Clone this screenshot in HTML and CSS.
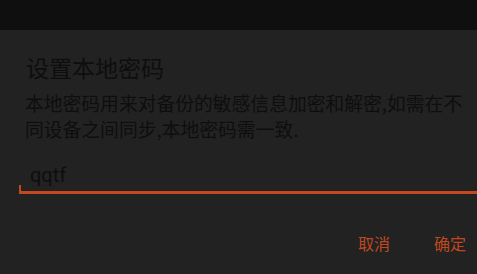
FILE: index.html
```html
<!DOCTYPE html>
<html lang="zh-CN">
<head>
    <meta charset="UTF-8">
    <meta name="viewport" content="width=device-width, initial-scale=1.0">
    <title>设置本地密码</title>
    <link rel="stylesheet" href="styles.css">
</head>
<body>

    <div class="top-bar"></div>

    <div class="dialog">
        <h2 class="dialog-title">设置本地密码</h2>

        <p class="dialog-message">本地密码用来对备份的敏感信息加密和解密,如需在不同设备之间同步,本地密码需一致.</p>

        <!-- 密码输入框 -->
        <div class="input-wrap">
            <div class="input-text">qqtf</div>
        </div>

        <!-- 按钮 -->
        <div class="dialog-buttons">
            <button class="dialog-btn">取消</button>
            <button class="dialog-btn">确定</button>
        </div>
    </div>

</body>
</html>
```

FILE: styles.css
```css
body {
    margin: 0;
    padding: 0;
    width: 477px;
    height: 274px;
    overflow: hidden;
    background-color: #222222;
    font-family: "Noto Sans CJK SC", "Noto Sans", sans-serif;
}

.top-bar {
    height: 30px;
    background-color: #0f0f0f;
}

.dialog {
    background-color: #222222;
    padding: 0 0 0 19px;
}

.dialog-title {
    margin: 0;
    padding: 21px 0 0 7px;
    font-size: 23px;
    font-weight: normal;
    line-height: 32px;
    color: #0e0e0e;
}

.dialog-message {
    margin: 0;
    padding: 7px 10px 0 6px;
    font-size: 18.8px;
    line-height: 26px;
    color: #0e0e0e;
}

.input-wrap {
    margin-top: 21px;
    height: 28px;
    border-bottom: 3px solid #c4471d;
    position: relative;
}

.input-wrap::before {
    content: "";
    position: absolute;
    left: 0;
    bottom: 0;
    width: 2px;
    height: 6px;
    background-color: #c4471d;
}

.input-text {
    padding-left: 11px;
    font-family: "Roboto", "Noto Sans", sans-serif;
    font-size: 20px;
    line-height: 24px;
    color: #0e0e0e;
}

.dialog-buttons {
    display: flex;
    justify-content: flex-end;
    gap: 44px;
    padding: 37px 11px 0 0;
}

.dialog-btn {
    background: none;
    border: none;
    padding: 0;
    font-family: "Noto Sans CJK SC", sans-serif;
    font-size: 16px;
    line-height: 24px;
    color: #bf4820;
}
```
